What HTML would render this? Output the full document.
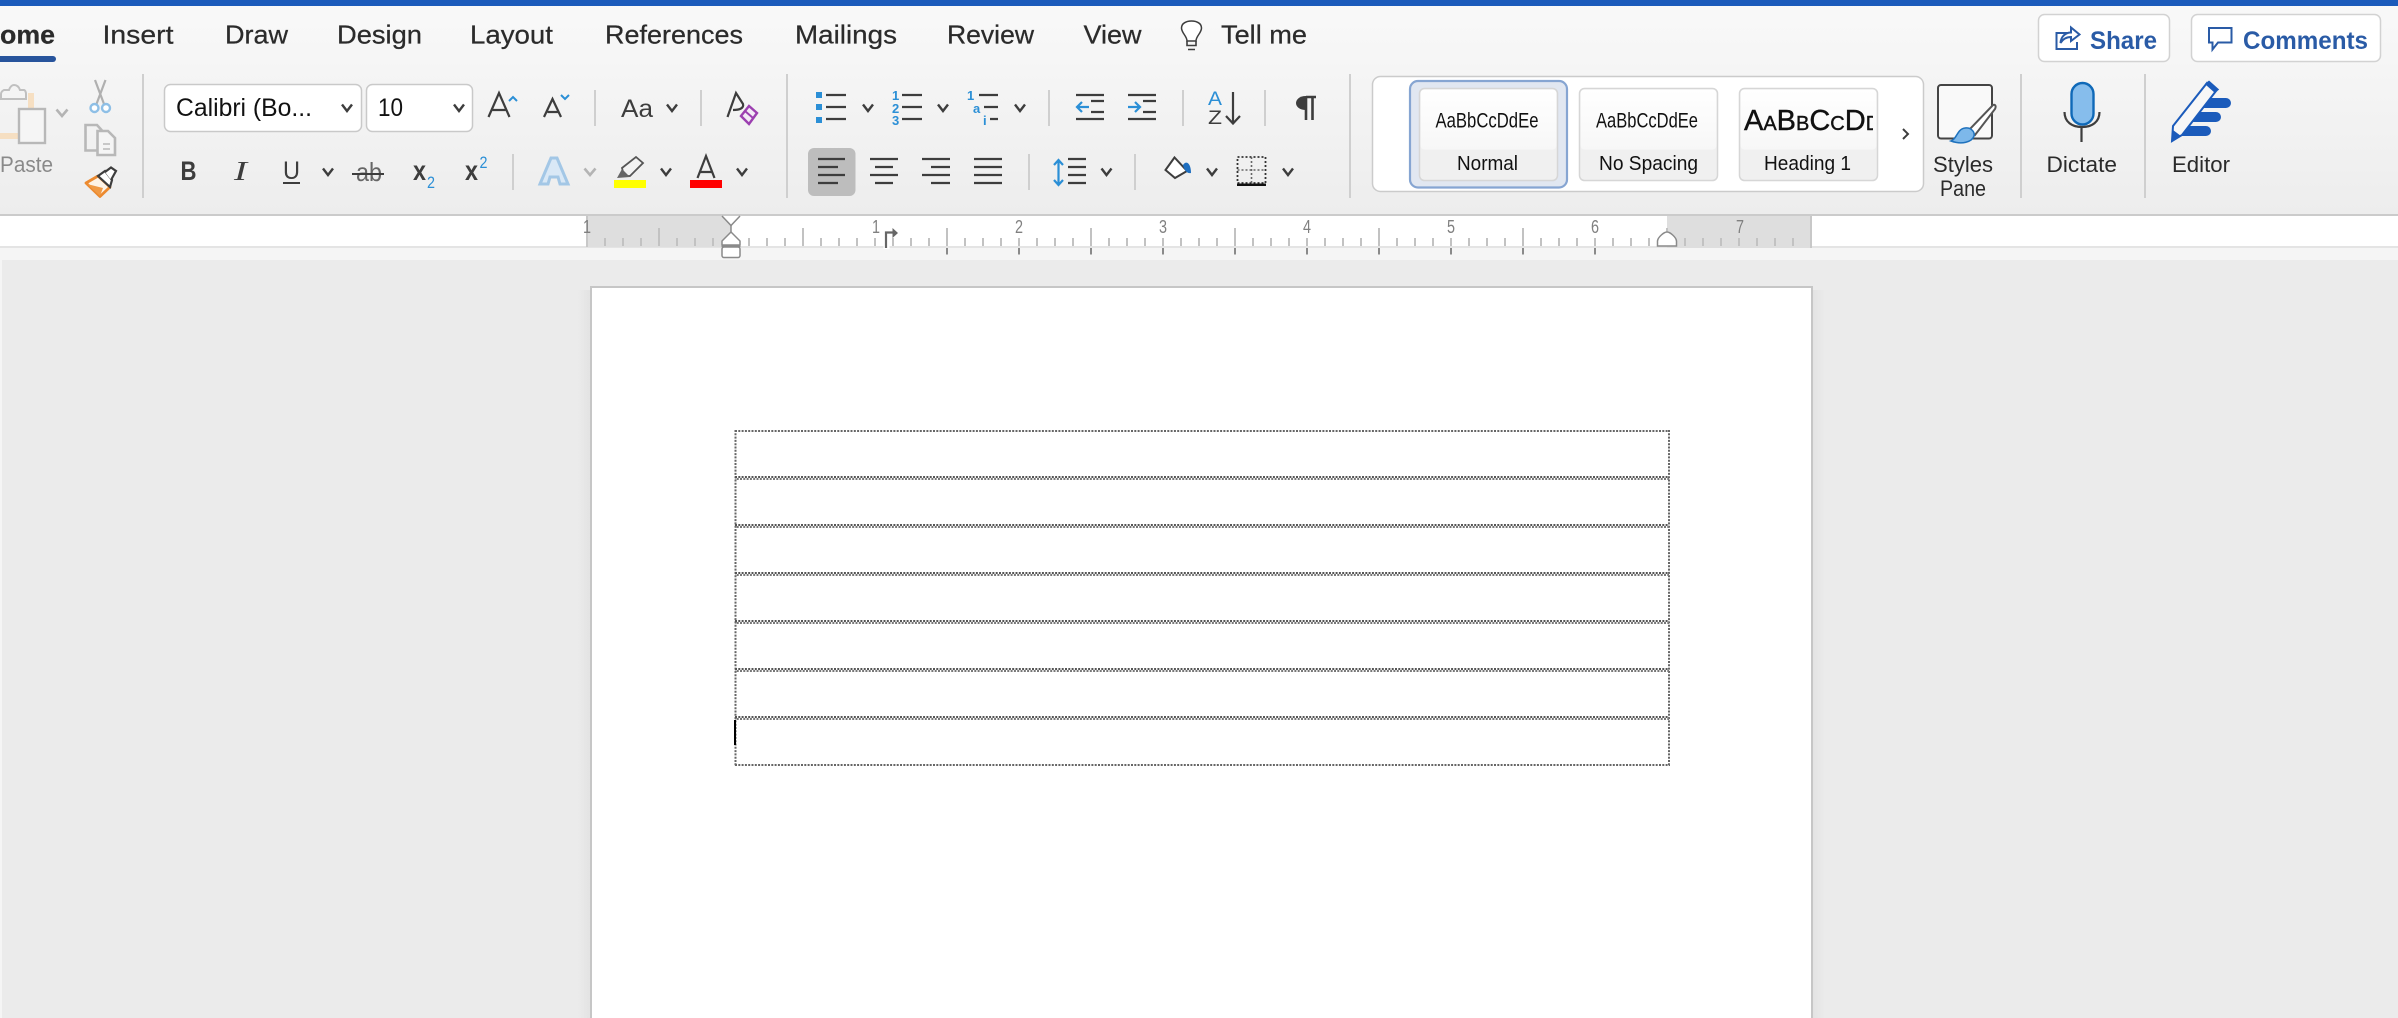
<!DOCTYPE html>
<html lang="en">
<head>
<meta charset="utf-8">
<title>Word</title>
<style>
html,body{margin:0;padding:0;background:#fff;width:2398px;height:1018px;overflow:hidden}
svg{display:block}
text{font-family:"Liberation Sans",sans-serif;fill:#2b2b2b}
.tab{font-size:26px;stroke:#2b2b2b;stroke-width:.25px}
.lab{font-size:22px;fill:#2b2b2b}
.sty{font-size:20px;fill:#111}
.smp{font-size:21px;fill:#111}
.rl{font-size:18px;fill:#808080;text-anchor:middle}
.l{stroke:#3d3d3d;stroke-width:2.2;fill:none}
.sep{stroke:#cfcfcf;stroke-width:2}
</style>
</head>
<body>
<svg xmlns="http://www.w3.org/2000/svg" width="2398" height="1018" viewBox="0 0 2398 1018">
<defs>
<linearGradient id="rib" x1="0" y1="0" x2="0" y2="1"><stop offset="0" stop-color="#f9f9f9"/><stop offset="1" stop-color="#ededed"/></linearGradient>
<linearGradient id="card" x1="0" y1="0" x2="0" y2="1"><stop offset="0" stop-color="#ffffff"/><stop offset="1" stop-color="#f7f7f7"/></linearGradient>
<linearGradient id="shl" x1="0" y1="0" x2="1" y2="0"><stop offset="0" stop-color="#ebebeb"/><stop offset="1" stop-color="#e3e3e3"/></linearGradient>
<linearGradient id="shr" x1="0" y1="0" x2="1" y2="0"><stop offset="0" stop-color="#e3e3e3"/><stop offset="1" stop-color="#ebebeb"/></linearGradient>
<pattern id="tS" patternUnits="userSpaceOnUse" x="586" y="0" width="18" height="20"><rect x="0" y="0" width="2" height="20" fill="#c2c2c2"/></pattern>
<pattern id="tL" patternUnits="userSpaceOnUse" x="658" y="0" width="144" height="40"><rect x="0" y="0" width="2" height="40" fill="#c2c2c2"/></pattern>
<pattern id="tB" patternUnits="userSpaceOnUse" x="946" y="0" width="72" height="20"><rect x="0" y="0" width="2" height="20" fill="#8a8a8a"/></pattern>
<g id="ch"><path d="M-5 -3.5L0 3L5 -3.5" fill="none" stroke="#3d3d3d" stroke-width="2.4"/></g>
<g id="chg"><path d="M-5.500 -3.500L0 3L5.500 -3.500" fill="none" stroke="#b4b4b4" stroke-width="2.600"/></g>
<clipPath id="hd"><rect x="1740" y="100" width="133" height="40"/></clipPath>
</defs>

<!-- backgrounds -->
<rect width="2398" height="1018" fill="#ebebeb"/>
<rect x="0" y="0" width="2398" height="214" fill="url(#rib)"/>
<rect x="0" y="0" width="2398" height="6" fill="#1b5bbb"/>
<rect x="0" y="214" width="2398" height="2" fill="#cbcbcb"/>
<rect x="0" y="216" width="2398" height="30" fill="#fff"/>
<rect x="0" y="246" width="2398" height="2" fill="#e4e4e4"/>
<rect x="0" y="248" width="2398" height="12" fill="#f5f5f5"/>
<rect x="0" y="260" width="2" height="758" fill="#f5f5f5"/>

<!-- tabs -->
<text class="tab" x="0" y="43.500" textLength="55" lengthAdjust="spacingAndGlyphs" font-weight="700">ome</text>
<rect x="-6" y="56" width="62" height="6" rx="3" fill="#27549c"/>
<text class="tab" x="102.500" y="43.500" textLength="71" lengthAdjust="spacingAndGlyphs">Insert</text>
<text class="tab" x="225" y="43.500" textLength="63" lengthAdjust="spacingAndGlyphs">Draw</text>
<text class="tab" x="337" y="43.500" textLength="85" lengthAdjust="spacingAndGlyphs">Design</text>
<text class="tab" x="470" y="43.500" textLength="83" lengthAdjust="spacingAndGlyphs">Layout</text>
<text class="tab" x="605" y="43.500" textLength="138" lengthAdjust="spacingAndGlyphs">References</text>
<text class="tab" x="795" y="43.500" textLength="102" lengthAdjust="spacingAndGlyphs">Mailings</text>
<text class="tab" x="947" y="43.500" textLength="87" lengthAdjust="spacingAndGlyphs">Review</text>
<text class="tab" x="1083.500" y="43.500" textLength="58" lengthAdjust="spacingAndGlyphs">View</text>
<text class="tab" x="1221" y="43.500" textLength="86" lengthAdjust="spacingAndGlyphs">Tell me</text>
<!-- bulb -->
<path d="M1187 41C1187 36 1181.500 33 1181.500 28C1181.500 23.500 1186 21 1191.500 21C1197 21 1201.500 23.500 1201.500 28C1201.500 33 1196 36 1196 41Z" fill="#fff" stroke="#3d3d3d" stroke-width="1.500"/>
<path d="M1187 41V45.500H1196V41M1188 49.500H1195" fill="none" stroke="#3d3d3d" stroke-width="1.600"/>

<!-- share / comments -->
<rect x="2038.500" y="14.500" width="131" height="47" rx="6" fill="#fff" stroke="#d2d2d2" stroke-width="1.500"/>
<rect x="2191.500" y="14.500" width="189" height="47" rx="6" fill="#fff" stroke="#d2d2d2" stroke-width="1.500"/>
<path d="M2071 33H2056.500V49H2077V42" fill="none" stroke="#2a5ba6" stroke-width="2"/>
<path d="M2060.500 43C2061 36 2066 32.500 2071 32.500V27.500L2079.500 34.500L2071 41V37C2067 37 2063 39 2060.500 43Z" fill="#fff" stroke="#2a5ba6" stroke-width="2"/>
<text x="2090" y="49" font-size="25" font-weight="700" textLength="67" lengthAdjust="spacingAndGlyphs" style="fill:#2a5ba6">Share</text>
<path d="M2209 28H2231.500V42.500H2218L2212.500 49.500V42.500H2209Z" fill="#fff" stroke="#2a5ba6" stroke-width="2"/>
<text x="2243" y="49" font-size="25" font-weight="700" textLength="125" lengthAdjust="spacingAndGlyphs" style="fill:#2a5ba6">Comments</text>

<!-- separators -->
<line class="sep" x1="143" y1="74" x2="143" y2="198"/>
<line class="sep" x1="787" y1="74" x2="787" y2="198"/>
<line class="sep" x1="1350" y1="74" x2="1350" y2="198"/>
<line class="sep" x1="2021" y1="74" x2="2021" y2="198"/>
<line class="sep" x1="2145" y1="74" x2="2145" y2="198"/>
<line class="sep" x1="595" y1="90" x2="595" y2="126"/>
<line class="sep" x1="701" y1="90" x2="701" y2="126"/>
<line class="sep" x1="513" y1="154" x2="513" y2="190"/>
<line class="sep" x1="1049" y1="90" x2="1049" y2="126"/>
<line class="sep" x1="1183" y1="90" x2="1183" y2="126"/>
<line class="sep" x1="1265" y1="90" x2="1265" y2="126"/>
<line class="sep" x1="1029" y1="154" x2="1029" y2="190"/>
<line class="sep" x1="1135" y1="154" x2="1135" y2="190"/>

<!-- clipboard group -->
<path d="M28 93H34V139H0V133H28Z" fill="#f6dfc2"/>
<path d="M1 94C1 92 2 91 4 90H9C10 87 12 85 14 85C17 85 19 87 20 90H24C25 90 26 92 26 94V99H1Z" fill="#f4f4f4" stroke="#c0c0c0" stroke-width="2"/>
<rect x="19" y="109" width="26" height="34" fill="#f5f5f5" stroke="#b8b8b8" stroke-width="2.400"/>
<use href="#chg" x="62" y="113"/>
<text x="0" y="172" font-size="22" textLength="53" lengthAdjust="spacingAndGlyphs" style="fill:#8a8a8a">Paste</text>
<!-- scissors -->
<path d="M95 80L104 104M105.500 80L96.500 104" fill="none" stroke="#b0b0b0" stroke-width="2.200"/>
<circle cx="94.500" cy="108" r="4" fill="#fff" stroke="#8ebfe6" stroke-width="2.400"/>
<circle cx="106" cy="108" r="4" fill="#fff" stroke="#8ebfe6" stroke-width="2.400"/>
<!-- copy -->
<path d="M97 150.500H85.500V125H97L102 130.500" fill="none" stroke="#b8b8b8" stroke-width="2.600"/>
<path d="M97.500 131H108L115 138V155H97.500Z" fill="#f5f5f5" stroke="#b8b8b8" stroke-width="2.600"/>
<path d="M103 144H110M103 149H110" stroke="#c2c2c2" stroke-width="1.800"/>
<!-- format painter -->
<path d="M86 183L98 176L110 187L100 196.500Z" fill="#fdf3e7" stroke="#ec8a2f" stroke-width="2.800" stroke-linejoin="round"/>
<path d="M87 184L100 196L103 188Z" fill="#f09a45"/>
<path d="M98 176L105 171L112 180L110 187Z" fill="#fff" stroke="#3d3d3d" stroke-width="2.200"/>
<path d="M105 172L111 167.500L116 171L111 180" fill="#fff" stroke="#3d3d3d" stroke-width="2.200"/>

<!-- font boxes -->
<rect x="164.500" y="84.500" width="197" height="47" rx="6" fill="#fff" stroke="#c9c9c9" stroke-width="1.500"/>
<rect x="366.500" y="84.500" width="106" height="47" rx="6" fill="#fff" stroke="#c9c9c9" stroke-width="1.500"/>
<text x="176" y="116" font-size="25" textLength="136" lengthAdjust="spacingAndGlyphs" style="fill:#111">Calibri (Bo...</text>
<text x="378" y="116" font-size="25" textLength="25" lengthAdjust="spacingAndGlyphs" style="fill:#111">10</text>
<use href="#ch" x="347" y="108"/>
<use href="#ch" x="459" y="108"/>
<path d="M488.500 117L499 93L509.500 117M492.500 110H505.500" class="l"/>
<path d="M509 101L513 97L517 101" fill="none" stroke="#2b8fd6" stroke-width="2"/>
<path d="M544 117L552.500 99L561 117M547.500 112H558" class="l"/>
<path d="M561 95L565 99L569 95" fill="none" stroke="#2b8fd6" stroke-width="2"/>
<text x="621" y="117" font-size="25" textLength="32" lengthAdjust="spacingAndGlyphs" style="fill:#3d3d3d">Aa</text>
<use href="#ch" x="672" y="108"/>
<path d="M727.500 117L736 93L743 104C744 108 740 110 733 110" class="l"/>
<path d="M741 116L749 106L757 113L749 124Z" fill="#f3eaf6" stroke="#9c3fb0" stroke-width="2.400"/>
<path d="M745 111L753 118" stroke="#9c3fb0" stroke-width="2"/>

<!-- row 2 font -->
<text x="180.500" y="180" font-size="27" font-weight="700" textLength="16" lengthAdjust="spacingAndGlyphs" style="fill:#3d3d3d">B</text>
<text x="234" y="180" font-size="27" font-style="italic" textLength="13" lengthAdjust="spacingAndGlyphs" style="font-family:'Liberation Serif',serif;fill:#3d3d3d">I</text>
<text x="283" y="179" font-size="25" textLength="17" lengthAdjust="spacingAndGlyphs" style="fill:#3d3d3d">U</text>
<rect x="283" y="182" width="17" height="2" fill="#3d3d3d"/>
<use href="#ch" x="328" y="172"/>
<text x="356" y="181" font-size="26" textLength="26" lengthAdjust="spacingAndGlyphs" style="fill:#666">ab</text>
<line x1="352" y1="174" x2="384" y2="174" stroke="#3d3d3d" stroke-width="2"/>
<text x="413" y="180" font-size="28" font-weight="700" textLength="13" lengthAdjust="spacingAndGlyphs" style="fill:#3d3d3d">x</text>
<text x="427" y="188" font-size="17" textLength="8" lengthAdjust="spacingAndGlyphs" style="fill:#2b8fd6">2</text>
<text x="465" y="180" font-size="28" font-weight="700" textLength="13" lengthAdjust="spacingAndGlyphs" style="fill:#3d3d3d">x</text>
<text x="479.500" y="168" font-size="17" textLength="8" lengthAdjust="spacingAndGlyphs" style="fill:#2b8fd6">2</text>
<path d="M540 184L551 158H557L568 184H560L558 177H550L548 184Z" fill="#d9e8f6" stroke="#a3c7e6" stroke-width="3"/>
<use href="#chg" x="590" y="172"/>
<path d="M622 168L636 157L643 163L630 176H624Z" fill="#f3f3f3" stroke="#555" stroke-width="1.800"/>
<path d="M617 178L622 169L630 177Z" fill="#666"/>
<rect x="614" y="180" width="32" height="8" fill="#ffff00"/>
<use href="#ch" x="666" y="172"/>
<path d="M697.500 178L706 156L714.500 178M700.500 172H711.500" class="l"/>
<rect x="690" y="180" width="32" height="8" fill="#ff0000"/>
<use href="#ch" x="742" y="172"/>

<!-- list icons -->
<g fill="#2b8fd6">
<rect x="816" y="92" width="6" height="6"/><rect x="816" y="104" width="6" height="6"/><rect x="816" y="117" width="6" height="6"/>
</g>
<path d="M826 95H846M826 107H846M826 119H846" class="l"/>
<use href="#ch" x="868" y="108"/>
<g font-size="13" font-weight="700"><text x="892" y="100" style="fill:#2b8fd6">1</text><text x="892" y="113" style="fill:#2b8fd6">2</text><text x="892" y="125" style="fill:#2b8fd6">3</text></g>
<path d="M902 95H922M902 107H922M902 119H922" class="l"/>
<use href="#ch" x="943" y="108"/>
<g font-size="13" font-weight="700"><text x="967" y="100" style="fill:#2b8fd6">1</text><text x="973" y="113" style="fill:#2b8fd6">a</text><text x="983" y="125" style="fill:#2b8fd6">i</text></g>
<path d="M979 95H998M984 107H998M990 119H998" class="l"/>
<use href="#ch" x="1020" y="108"/>
<!-- indent -->
<path d="M1076 95H1104M1091 101H1104M1091 112H1104M1076 119H1104" class="l"/>
<path d="M1089 107H1077M1082 102L1077 107L1082 112" fill="none" stroke="#2b8fd6" stroke-width="2.200"/>
<path d="M1128 95H1156M1143 101H1156M1143 112H1156M1128 119H1156" class="l"/>
<path d="M1128 107H1140M1135 102L1140 107L1135 112" fill="none" stroke="#2b8fd6" stroke-width="2.200"/>
<!-- sort -->
<text x="1208" y="105" font-size="19" textLength="14" lengthAdjust="spacingAndGlyphs" style="fill:#2b8fd6">A</text>
<text x="1208" y="124" font-size="19" textLength="14" lengthAdjust="spacingAndGlyphs" style="fill:#3d3d3d">Z</text>
<path d="M1233 92V123M1226 116L1233 123.500L1240 116" class="l"/>
<!-- pilcrow -->
<path d="M1306 97H1316M1306 97V120M1312.500 97V120" fill="none" stroke="#3d3d3d" stroke-width="2.600"/>
<path d="M1306 96C1299 96 1296 100 1296 103C1296 107 1300 110 1306 110Z" fill="#3d3d3d"/>

<!-- align -->
<rect x="808" y="148" width="47.500" height="48" rx="6" fill="#bdbdbd"/>
<path d="M818 159H845M818 167H838M818 175H845M818 183H838" class="l"/>
<path d="M870 159H898M875 167H893M870 175H898M875 183H893" class="l"/>
<path d="M922 159H950M931 167H950M922 175H950M931 183H950" class="l"/>
<path d="M974 159H1002M974 167H1002M974 175H1002M974 183H1002" class="l"/>
<path d="M1058.500 160V185M1054 165L1058.500 160L1063 165M1054 180L1058.500 185L1063 180" fill="none" stroke="#2b8fd6" stroke-width="2.200"/>
<path d="M1068 159H1086M1068 167H1086M1068 175H1086M1068 183H1086" class="l"/>
<use href="#ch" x="1106.500" y="172"/>
<!-- shading -->
<path d="M1165.500 170L1174.500 157.500L1187 171L1175 178Z" fill="#fff" stroke="#3d3d3d" stroke-width="2"/>
<path d="M1183 165C1186 160 1191 163 1191 173C1187 174 1184 170 1183 165Z" fill="#1f6fc0"/>
<use href="#ch" x="1212" y="172"/>
<!-- borders -->
<rect x="1237.500" y="157" width="28" height="26" fill="none" stroke="#333" stroke-width="1.800" stroke-dasharray="2 2"/>
<path d="M1251.500 157V183M1237.500 170H1265.500" fill="none" stroke="#666" stroke-width="1.600" stroke-dasharray="2 2"/>
<rect x="1237" y="183.500" width="29" height="2.500" fill="#111"/>
<use href="#ch" x="1288" y="172"/>

<!-- styles gallery -->
<rect x="1372.500" y="76.500" width="551" height="115" rx="8" fill="#fff" stroke="#cbcbcb" stroke-width="1.500"/>
<rect x="1410" y="81" width="157" height="106.500" rx="8" fill="#e1e7f1" stroke="#86a5d2" stroke-width="2.200"/>
<g stroke="#d6d6d6" stroke-width="1.500">
<rect x="1419.500" y="88.500" width="138" height="92" rx="5" fill="#f0f0f0"/>
<rect x="1579.500" y="88.500" width="138" height="92" rx="5" fill="#f0f0f0"/>
<rect x="1739.500" y="88.500" width="138" height="92" rx="5" fill="#f0f0f0"/>
</g>
<rect x="1420.500" y="89.500" width="136" height="60" rx="4" fill="url(#card)"/>
<rect x="1580.500" y="89.500" width="136" height="60" rx="4" fill="url(#card)"/>
<rect x="1740.500" y="89.500" width="136" height="60" rx="4" fill="url(#card)"/>
<text class="smp" x="1435.500" y="127.500" textLength="103" lengthAdjust="spacingAndGlyphs">AaBbCcDdEe</text>
<text class="smp" x="1596" y="127.500" textLength="102" lengthAdjust="spacingAndGlyphs">AaBbCcDdEe</text>
<text x="1744" y="130" font-size="29" clip-path="url(#hd)" style="font-variant:small-caps;fill:#111;stroke:#111;stroke-width:.4px">AaBbCcDd</text>
<text class="sty" x="1457" y="170" textLength="61" lengthAdjust="spacingAndGlyphs">Normal</text>
<text class="sty" x="1599" y="170" textLength="99" lengthAdjust="spacingAndGlyphs">No Spacing</text>
<text class="sty" x="1764" y="170" textLength="87" lengthAdjust="spacingAndGlyphs">Heading 1</text>
<path d="M1903 129L1908 134L1903 139" fill="none" stroke="#3d3d3d" stroke-width="2"/>

<!-- styles pane -->
<rect x="1938" y="85" width="54" height="53.500" rx="3" fill="#f9f9f9" stroke="#444" stroke-width="2"/>
<path d="M1993 105C1996 104 1996 107 1995 109L1975 135L1969 130Z" fill="#fff" stroke="#555" stroke-width="2"/>
<path d="M1965 128C1971 127 1975 132 1974 136C1972 142 1962 145 1951 141C1957 139 1957 129 1965 128Z" fill="#7db8ea" stroke="#1f72bd" stroke-width="1.500"/>
<text class="lab" x="1933" y="172" textLength="60" lengthAdjust="spacingAndGlyphs">Styles</text>
<text class="lab" x="1940" y="196" textLength="46" lengthAdjust="spacingAndGlyphs">Pane</text>

<!-- dictate -->
<path d="M2064.500 112C2064.500 122 2072 127 2082 127C2092 127 2099.500 122 2099.500 112M2081.500 127V142" fill="none" stroke="#3d3d3d" stroke-width="2.200"/>
<rect x="2071.500" y="83" width="22" height="41.500" rx="11" fill="#86bdec" stroke="#0f69b8" stroke-width="2.400"/>
<text class="lab" x="2046.500" y="172" textLength="70.500" lengthAdjust="spacingAndGlyphs">Dictate</text>

<!-- editor -->
<path d="M2199 98H2226A5 5 0 0 1 2226 108H2193ZM2189 112H2216A5 5 0 0 1 2216 122H2183ZM2179 126H2206A5 5 0 0 1 2206 136H2173Z" fill="#1b5bbb"/>
<path d="M2173 126L2207 83L2216 91L2182 135L2172 141Z" fill="#f7f7f7" stroke="#1b5bbb" stroke-width="2"/>
<path d="M2206 84L2209 81.500L2218 89.500L2215 92Z" fill="#1b5bbb" stroke="#1b5bbb" stroke-width="1.500"/>
<path d="M2171.500 142.500L2173 130L2181 136Z" fill="#1b5bbb"/>
<text class="lab" x="2172" y="172" textLength="58" lengthAdjust="spacingAndGlyphs">Editor</text>

<!-- ruler -->
<rect x="586" y="216" width="145" height="31" fill="#dedede"/>
<rect x="1667" y="216" width="144" height="32" fill="#dedede"/>
<rect x="604" y="238" width="1207" height="8" fill="url(#tS)"/>
<rect x="658" y="228" width="1153" height="18" fill="url(#tL)"/>
<rect x="946" y="248" width="652" height="6.500" fill="url(#tB)"/>
<rect x="586" y="216" width="2" height="31" fill="#c8c8c8"/>
<rect x="1810" y="216" width="2" height="32" fill="#c8c8c8"/>
<text class="rl" x="587" y="233" textLength="8" lengthAdjust="spacingAndGlyphs">1</text>
<text class="rl" x="876" y="233" textLength="8" lengthAdjust="spacingAndGlyphs">1</text>
<text class="rl" x="1019" y="233" textLength="8" lengthAdjust="spacingAndGlyphs">2</text>
<text class="rl" x="1163" y="233" textLength="8" lengthAdjust="spacingAndGlyphs">3</text>
<text class="rl" x="1307" y="233" textLength="8" lengthAdjust="spacingAndGlyphs">4</text>
<text class="rl" x="1451" y="233" textLength="8" lengthAdjust="spacingAndGlyphs">5</text>
<text class="rl" x="1595" y="233" textLength="8" lengthAdjust="spacingAndGlyphs">6</text>
<text class="rl" x="1740" y="233" textLength="8" lengthAdjust="spacingAndGlyphs">7</text>
<!-- tab stop -->
<rect x="883.500" y="246" width="6" height="3" fill="#fff"/>
<path d="M886 248V232.500H893" fill="none" stroke="#666" stroke-width="2.200"/>
<path d="M892.500 228L898 233L892.500 238Z" fill="#666"/>
<!-- indent markers -->
<path d="M722 216L731 225.500L740 216" fill="#fff" stroke="#8a8a8a" stroke-width="1.500"/>
<path d="M731 225V232" stroke="#8a8a8a" stroke-width="1.500"/>
<path d="M722 241L731 232L740 241V245H722Z" fill="#fff" stroke="#8a8a8a" stroke-width="1.500" stroke-linejoin="round"/>
<rect x="721.500" y="245" width="19" height="2" fill="#8a8a8a"/>
<rect x="722" y="247" width="18" height="10.500" rx="2" fill="#fff" stroke="#8a8a8a" stroke-width="1.500"/>
<path d="M1657.500 241C1658 237 1664 232 1667 232C1670 232 1676 237 1676.500 241V246H1657.500Z" fill="#fff" stroke="#8a8a8a" stroke-width="1.500"/>

<!-- page -->
<rect x="578" y="290" width="12" height="728" fill="url(#shl)"/>
<rect x="1813" y="290" width="12" height="728" fill="url(#shr)"/>
<rect x="591" y="287" width="1221" height="740" fill="#fff" stroke="#c6c6c6" stroke-width="2"/>

<!-- table -->
<g fill="none" stroke-width="2">
<g stroke="#666" stroke-dasharray="2 1.300">
<line x1="735" y1="431" x2="1670" y2="431"/>
<line x1="735" y1="765" x2="1670" y2="765"/>
<line x1="735.500" y1="430" x2="735.500" y2="766"/>
<line x1="1669" y1="430" x2="1669" y2="766"/>
</g>
<g stroke="#555" stroke-dasharray="2 1.300">
<line x1="735" y1="477" x2="1669" y2="477"/>
<line x1="735" y1="525" x2="1669" y2="525"/>
<line x1="735" y1="573" x2="1669" y2="573"/>
<line x1="735" y1="621" x2="1669" y2="621"/>
<line x1="735" y1="669" x2="1669" y2="669"/>
<line x1="735" y1="717" x2="1669" y2="717"/>
</g>
<g stroke="#777" stroke-dasharray="2 1.300" stroke-dashoffset="1.600">
<line x1="735" y1="479" x2="1669" y2="479"/>
<line x1="735" y1="527" x2="1669" y2="527"/>
<line x1="735" y1="575" x2="1669" y2="575"/>
<line x1="735" y1="623" x2="1669" y2="623"/>
<line x1="735" y1="671" x2="1669" y2="671"/>
<line x1="735" y1="719" x2="1669" y2="719"/>
</g>
</g>
<rect x="734" y="720" width="2" height="25" fill="#000"/>
</svg>
</body>
</html>
